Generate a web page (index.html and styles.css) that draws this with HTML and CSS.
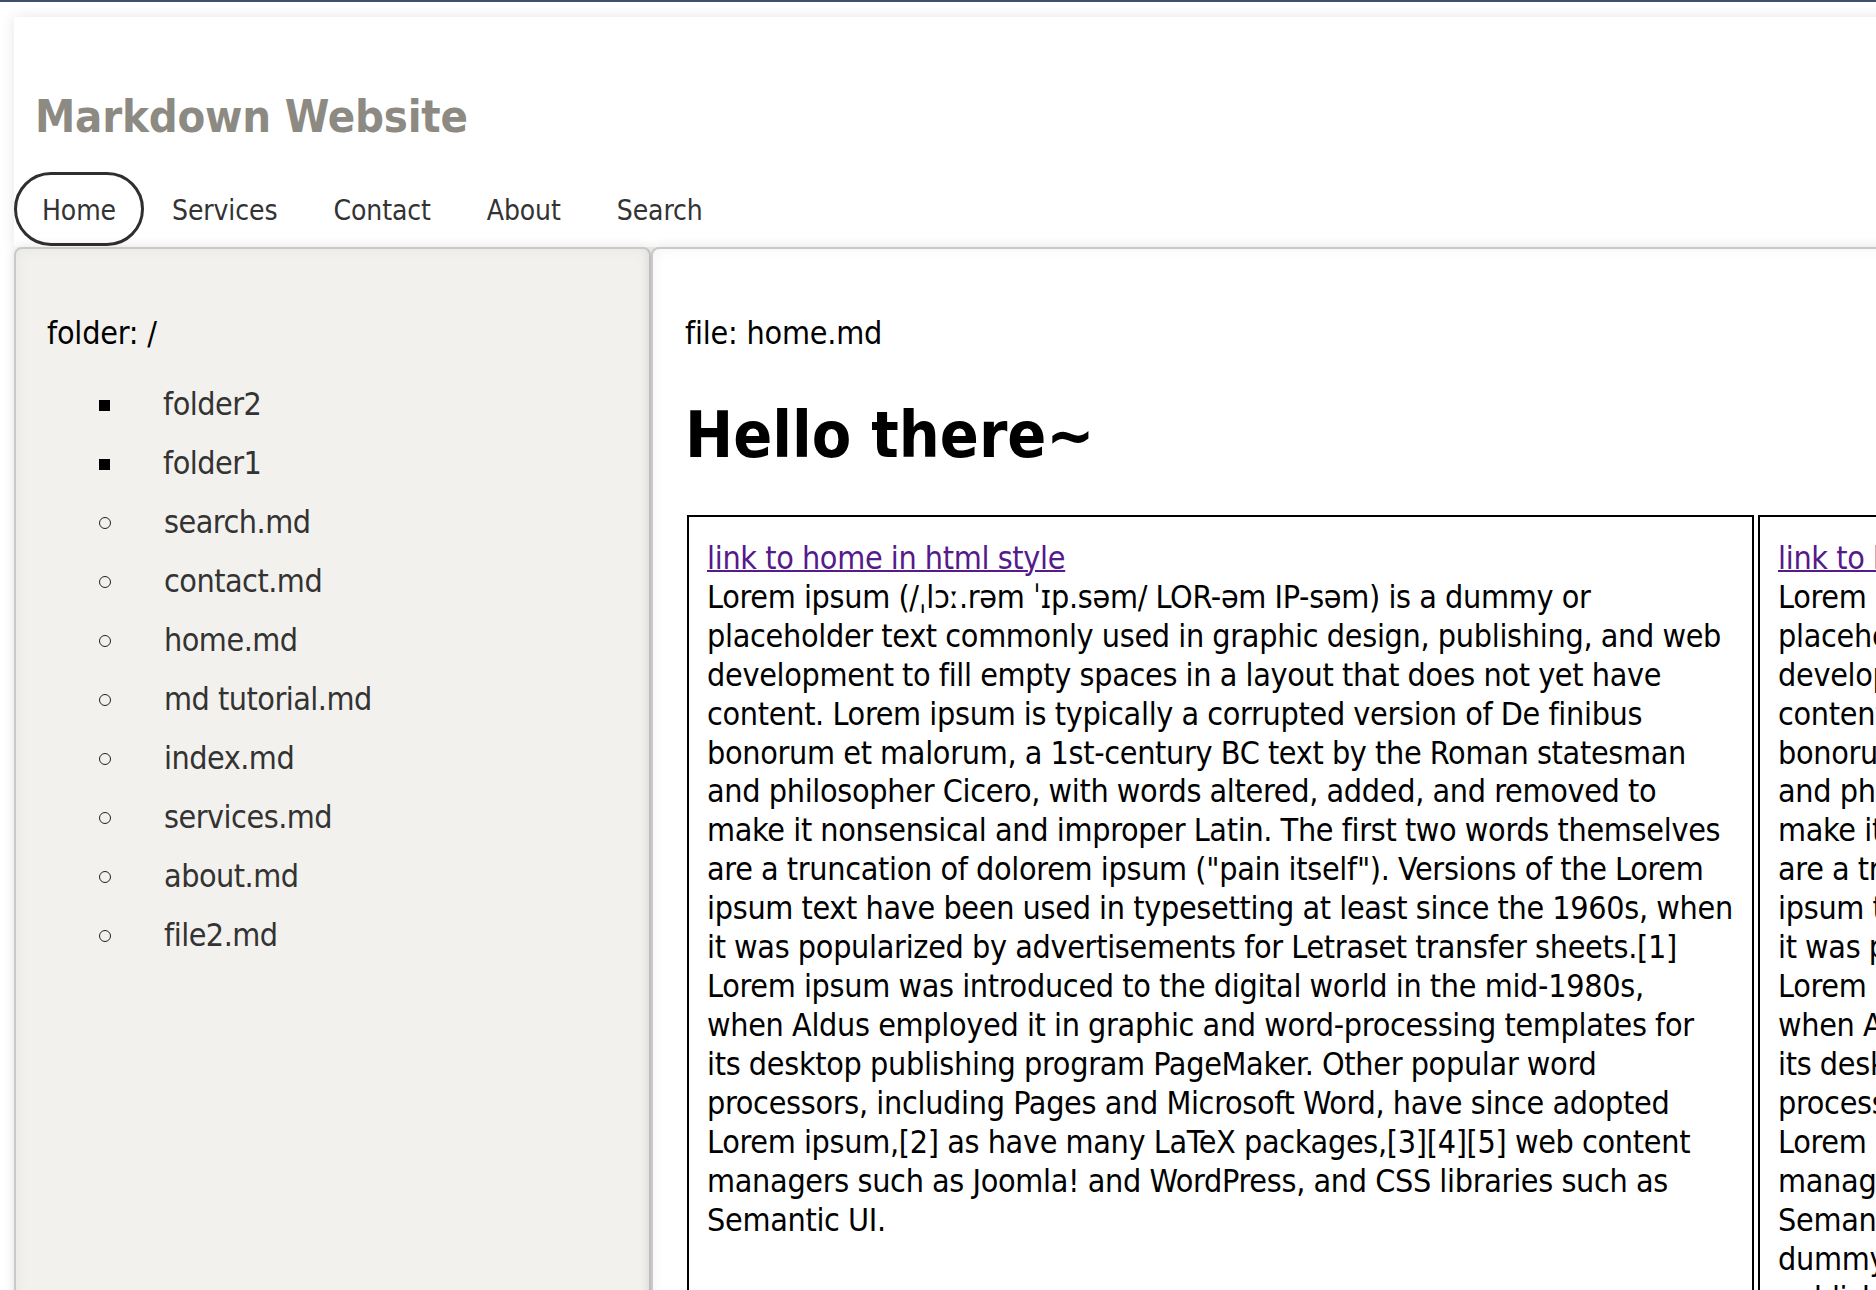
FILE: index.html
```html
<!DOCTYPE html>
<html lang="en">
<head>
<meta charset="utf-8">
<title>Markdown Website</title>
<link rel="stylesheet" href="styles.css">
</head>
<body>
<div class="viewport">
  <div class="page">
    <header class="site-header">
      <h1 class="site-title">Markdown Website</h1>
      <nav class="nav">
        <a class="nav-link active" href="#">Home</a>
        <a class="nav-link" href="#">Services</a>
        <a class="nav-link" href="#">Contact</a>
        <a class="nav-link" href="#">About</a>
        <a class="nav-link" href="#">Search</a>
      </nav>
    </header>
    <div class="layout">
      <aside class="sidebar">
        <p class="folder-title">folder: /</p>
        <ul class="tree">
          <li class="dir">folder2</li>
          <li class="dir">folder1</li>
          <li class="file">search.md</li>
          <li class="file">contact.md</li>
          <li class="file">home.md</li>
          <li class="file">md tutorial.md</li>
          <li class="file">index.md</li>
          <li class="file">services.md</li>
          <li class="file">about.md</li>
          <li class="file">file2.md</li>
        </ul>
      </aside>
      <main class="content">
        <p class="file-title">file: home.md</p>
        <h2 class="hello">Hello there~</h2>
        <div class="cells">
          <div class="cell">
            <a class="cell-link" href="#">link to home in html style</a><br>Lorem ipsum (/ˌlɔː.rəm ˈɪp.səm/ LOR-əm IP-səm) is a dummy or<br>placeholder text commonly used in graphic design, publishing, and web<br>development to fill empty spaces in a layout that does not yet have<br>content. Lorem ipsum is typically a corrupted version of De finibus<br>bonorum et malorum, a 1st-century BC text by the Roman statesman<br>and philosopher Cicero, with words altered, added, and removed to<br>make it nonsensical and improper Latin. The first two words themselves<br>are a truncation of dolorem ipsum ("pain itself"). Versions of the Lorem<br>ipsum text have been used in typesetting at least since the 1960s, when<br>it was popularized by advertisements for Letraset transfer sheets.[1]<br>Lorem ipsum was introduced to the digital world in the mid-1980s,<br>when Aldus employed it in graphic and word-processing templates for<br>its desktop publishing program PageMaker. Other popular word<br>processors, including Pages and Microsoft Word, have since adopted<br>Lorem ipsum,[2] as have many LaTeX packages,[3][4][5] web content<br>managers such as Joomla! and WordPress, and CSS libraries such as<br>Semantic UI.
          </div>
          <div class="cell">
            <a class="cell-link" href="#">link to home in markdown style</a><br>Lorem ipsum (/ˌlɔː.rəm ˈɪp.səm/ LOR-əm IP-səm) is a dummy or<br>placeholder text commonly used in graphic design, publishing, and web<br>development to fill empty spaces in a layout that does not yet have<br>content. Lorem ipsum is typically a corrupted version of De finibus<br>bonorum et malorum, a 1st-century BC text by the Roman statesman<br>and philosopher Cicero, with words altered, added, and removed to<br>make it nonsensical and improper Latin. The first two words themselves<br>are a truncation of dolorem ipsum ("pain itself"). Versions of the Lorem<br>ipsum text have been used in typesetting at least since the 1960s, when<br>it was popularized by advertisements for Letraset transfer sheets.[1]<br>Lorem ipsum was introduced to the digital world in the mid-1980s,<br>when Aldus employed it in graphic and word-processing templates for<br>its desktop publishing program PageMaker. Other popular word<br>processors, including Pages and Microsoft Word, have since adopted<br>Lorem ipsum,[2] as have many LaTeX packages,[3][4][5] web content<br>managers such as Joomla! and WordPress, and CSS libraries such as<br>Semantic UI. Lorem ipsum (/ˌlɔː.rəm ˈɪp.səm/ LOR-əm IP-səm) is a<br>dummy or placeholder text commonly used in graphic design,<br>publishing, and web development.
          </div>
        </div>
      </main>
    </div>
  </div>
</div>
</body>
</html>
```
FILE: styles.css
```css
html, body {
  margin: 0;
  padding: 0;
  background: #ffffff;
}

body {
  font-family: "DejaVu Sans Condensed", "DejaVu Sans", sans-serif;
  font-stretch: condensed;
  font-size: 32px;
  color: #000;
}

.viewport {
  width: 100vw;
  height: 100vh;
  overflow: hidden;
  box-sizing: border-box;
  border-top: 2px solid #3f4e6d;
}

.page {
  width: 2900px;
  padding: 15px 0 0 14px;
}

.site-header {
  background: #fff;
  box-shadow: 0 0 14px rgba(0, 0, 0, 0.10);
  padding: 73px 0 1px 0;
}

.site-title {
  margin: 0 0 28px 0;
  padding-left: 21px;
  font-size: 45px;
  line-height: 54px;
  font-weight: bold;
  color: #8c8a82;
  letter-spacing: -0.2px;
}

.nav {
  display: flex;
}

.nav-link {
  display: block;
  padding: 18px 25px 14px 25px;
  line-height: 36px;
  font-size: 28px;
  letter-spacing: -0.1px;
  color: #333;
  text-decoration: none;
  border: 3px solid transparent;
  border-radius: 40px;
}

.nav-link.active {
  border-color: #2f2f2f;
}

.layout {
  display: flex;
  align-items: stretch;
}

.sidebar {
  flex: 0 0 637px;
  box-sizing: border-box;
  background: #f2f1ed;
  border: 2px solid #c9c9c9;
  border-radius: 8px 8px 0 0;
  box-shadow: 0 0 12px rgba(0, 0, 0, 0.12), inset 0 0 14px rgba(0, 0, 0, 0.05);
  padding: 65px 32px 32px 31px;
}

.folder-title {
  margin: 0;
  line-height: 38.75px;
  letter-spacing: -0.2px;
}

.tree {
  list-style: none;
  margin: 22px 0 0 0;
  padding: 0 0 0 52px;
}

.tree li {
  display: flex;
  align-items: center;
  line-height: 39px;
  padding: 10px 0;
  color: #333;
  letter-spacing: -0.5px;
}

.tree li::before {
  content: "";
  flex: 0 0 auto;
  box-sizing: border-box;
  width: 12px;
  height: 12px;
  margin: 2px 53px 0 0;
}

.tree li.dir::before {
  width: 11px;
  height: 11px;
  background: #000;
}

.tree li.file::before {
  border: 1.5px solid #222;
  border-radius: 50%;
}

.content {
  flex: 1 1 auto;
  background: #fff;
  border: 2px solid #c9c9c9;
  border-right: none;
  border-radius: 8px 0 0 0;
  box-shadow: 0 0 12px rgba(0, 0, 0, 0.12), inset 0 0 14px rgba(0, 0, 0, 0.05);
  padding: 65px 32px 32px 32px;
}

.file-title {
  margin: 0;
  line-height: 38.75px;
  letter-spacing: -0.2px;
}

.hello {
  margin: 44px 0 0 0;
  font-size: 64px;
  line-height: 77px;
  font-weight: bold;
}

.cells {
  display: flex;
  gap: 4px;
  margin: 41px 0 0 2px;
}

.cell {
  flex: 0 0 1067px;
  box-sizing: border-box;
  border: 2px solid #000;
  padding: 22px 18px 20px 18px;
  line-height: 38.95px;
  letter-spacing: -0.3px;
  word-spacing: -0.4px;
  white-space: nowrap;
  overflow: hidden;
}

.cell-link {
  color: #551a8b;
  text-decoration: underline;
  text-decoration-thickness: 2px;
}
```
